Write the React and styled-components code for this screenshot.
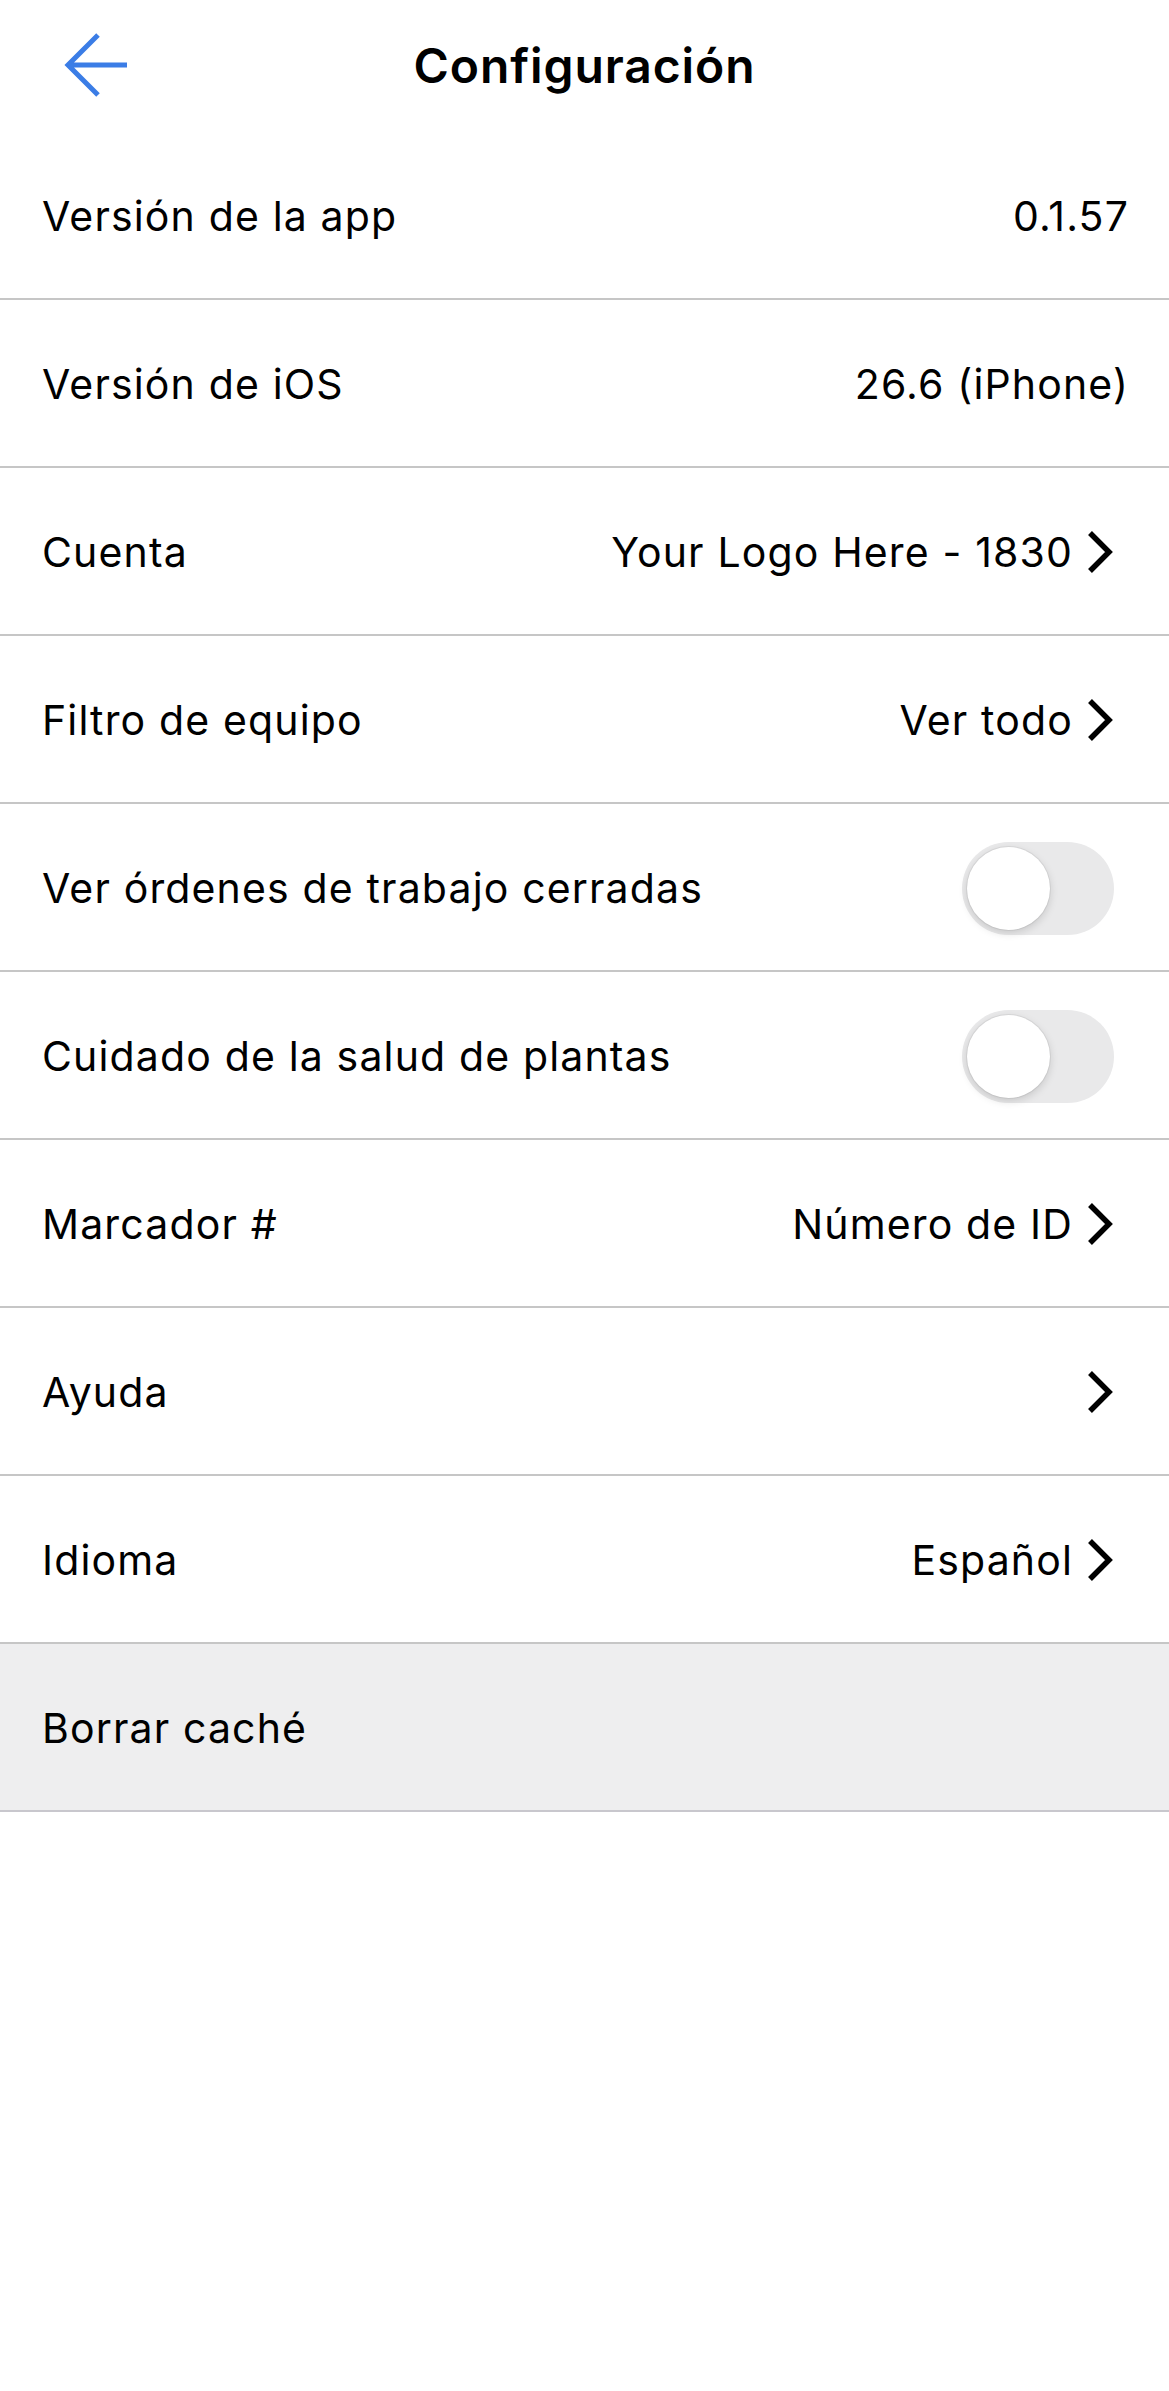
import { createGlobalStyle, styled } from "styled-components";

const GlobalStyle = createGlobalStyle`
  html, body {
    margin: 0;
    padding: 0;
    background: #ffffff;
  }
  body {
    font-family: Inter, "Noto Sans", "Liberation Sans", sans-serif;
    color: #000;
  }
`;

const settings = [
  { label: "Versión de la app", value: "0.1.57" },
  { label: "Versión de iOS", value: "26.6 (iPhone)" },
  { label: "Cuenta", value: "Your Logo Here - 1830", link: true },
  { label: "Filtro de equipo", value: "Ver todo", link: true },
  { label: "Ver órdenes de trabajo cerradas", toggle: true },
  { label: "Cuidado de la salud de plantas", toggle: true },
  { label: "Marcador #", value: "Número de ID", link: true },
  { label: "Ayuda", link: true },
  { label: "Idioma", value: "Español", link: true },
  { label: "Borrar caché", muted: true },
];

const BackArrow = () => (
  <svg width="64" height="64" viewBox="0 0 64 64" fill="none">
    <path
      d="M63 32 H4 M34 2 L4 32 L34 62"
      stroke="#3b7de6"
      strokeWidth="5"
      strokeLinecap="butt"
      strokeLinejoin="miter"
    />
  </svg>
);

const Chevron = () => (
  <svg width="26" height="44" viewBox="0 0 26 44" fill="none">
    <path d="M3 3 L22 22 L3 41" stroke="#000" strokeWidth="5.5" />
  </svg>
);

export default function App() {
  return (
    <Page>
      <GlobalStyle />
      <Header>
        <BackButton aria-label="Atrás">
          <BackArrow />
        </BackButton>
        <Title>Configuración</Title>
        <span />
      </Header>
      <List>
        {settings.map((item) => (
          <Row key={item.label} $muted={item.muted}>
            <Label>{item.label}</Label>
            {item.toggle ? (
              <Switch>
                <Thumb />
              </Switch>
            ) : (
              <Trail>
                {item.value && <Value>{item.value}</Value>}
                {item.link && <Chevron />}
              </Trail>
            )}
          </Row>
        ))}
      </List>
    </Page>
  );
}

const Page = styled.div`
  width: 100%;
  min-height: 2391px;
  background: #fff;
`;

const Header = styled.header`
  display: grid;
  grid-template-columns: 1fr auto 1fr;
  align-items: center;
  height: 132px;
  padding: 0 0 0 64px;
  box-sizing: border-box;
`;

const BackButton = styled.button`
  justify-self: start;
  display: flex;
  align-items: center;
  padding: 0;
  margin: -2px 0 0;
  border: none;
  background: none;
`;

const Title = styled.h1`
  margin: -2px 0 0 -64px;
  font-size: 48px;
  font-weight: 600;
  letter-spacing: 0.9px;
  color: #000;
`;

const List = styled.div`
  display: flex;
  flex-direction: column;
`;

const Row = styled.div`
  display: flex;
  align-items: center;
  justify-content: space-between;
  height: 168px;
  box-sizing: border-box;
  padding: 2px 40px 0 42px;
  border-bottom: 2px solid ${({ $muted }) => ($muted ? "#c8c7cd" : "#c6c6c6")};
  background: ${({ $muted }) => ($muted ? "#eeeeef" : "#fff")};
`;

const Label = styled.span`
  font-size: 41px;
  font-weight: 400;
  letter-spacing: 1.15px;
`;

const Trail = styled.div`
  display: flex;
  align-items: center;
  gap: 14px;
  & > svg {
    margin-right: 16px;
  }
`;

const Value = styled.span`
  font-size: 41px;
  font-weight: 400;
  letter-spacing: 1.15px;
`;

const Switch = styled.div`
  position: relative;
  width: 152px;
  height: 93px;
  border-radius: 47px;
  background: #e9e9ea;
  margin-right: 15px;
`;

const Thumb = styled.div`
  position: absolute;
  left: 5px;
  top: 5px;
  width: 83px;
  height: 83px;
  border-radius: 50%;
  background: #fff;
  box-shadow: 0 3px 8px rgba(0, 0, 0, 0.15), 0 0 0 1px rgba(0, 0, 0, 0.06);
`;
